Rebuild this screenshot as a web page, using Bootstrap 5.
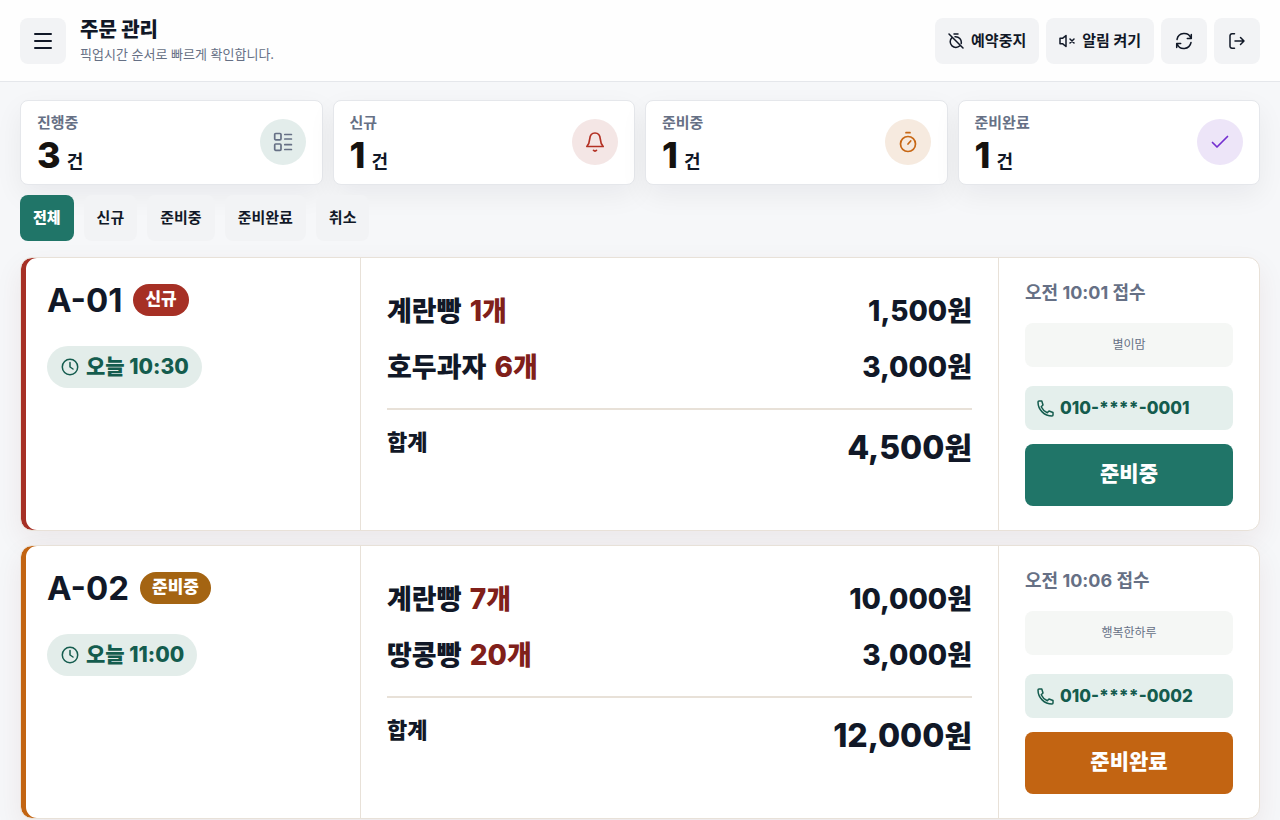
<!DOCTYPE html>
<html lang="ko">
<head>
<meta charset="utf-8">
<meta name="viewport" content="width=device-width, initial-scale=1">
<title>주문 관리</title>
<link href="https://cdn.jsdelivr.net/npm/bootstrap@5.3.0/dist/css/bootstrap.min.css" rel="stylesheet">
<style>
  :root { --ink:#111827; --muted:#667085; --teal:#207568; --teal-dark:#145c4e; --mint:#e3edea; --red:#a63025; --orange:#c26412; --line:#e8e1d8; }
  body { font-family: Inter, "Noto Sans CJK KR", sans-serif; color: var(--ink); background: #f6f7f9; }
  svg { fill: none; stroke: currentColor; stroke-width: 1.5; stroke-linecap: round; stroke-linejoin: round; flex-shrink: 0; }
  .topbar { padding: 17px 20px; background: #fefefe; border-bottom: 1px solid #e5e7eb; }
  .title-box { margin-left: 14px; padding-top: 1px; }
  .page-title { font-size: 20px; line-height: 24px; font-weight: 800; margin-bottom: 2px; }
  .page-sub { font-size: 13px; line-height: 20px; color: var(--muted); }
  .tools { gap: 7px; }
  .tool { height: 46px; min-width: 46px; padding: 0 13px; gap: 7px; border: 0; border-radius: 8px; background: #f2f3f5; color: var(--ink); font-size: 15px; line-height: 20px; font-weight: 700; }
  .tool.active { background: var(--teal); color: #fff; font-weight: 800; }
  .menu-icon { stroke-width: 2; }
  .stats { gap: 10px; padding: 18px 20px 10px; }
  .stat { flex: 1 1 0; padding: 0 16px 1px; height: 85px; background: #fff; border: 1px solid #e5e7eb; border-radius: 8px; box-shadow: 0 10px 28px rgba(17,24,39,.06); }
  .stat-text { padding-top: 6px; }
  .stat-name { font-size: 15px; line-height: 20px; font-weight: 700; color: var(--muted); }
  .stat-count { gap: 6px; }
  .stat-count strong { font-size: 36px; line-height: 44px; font-weight: 800; color: #15120f; }
  .stat-count span { font-size: 18px; line-height: 20px; font-weight: 700; }
  .dot { width: 46px; height: 46px; border-radius: 50%; }
  .dot svg { stroke-width: 1.7; }
  .dot-all { background: #e3edeb; color: var(--muted); }
  .dot-new { background: #f4e6e5; color: #b33124; }
  .dot-prep { background: #f6eadf; color: #c76714; }
  .dot-done { background: #ede5f8; color: #742fd0; }
  .tabs { gap: 10px; padding: 0 20px; }
  .orders { gap: 14px; padding: 16px 20px; }
  .order { --stripe: var(--red); display: grid; grid-template-columns: 340px minmax(0,1fr) 260px; background: #fff; border: 1px solid var(--line); border-radius: 12px; box-shadow: inset 5px 0 0 var(--stripe), 0 10px 28px rgba(100,30,30,.07); }
  .order.ready { --stripe: var(--orange); }
  .order > div { padding: 24px 26px; }
  .order > div:not(:last-child) { border-right: 1px solid var(--line); }
  .order-head { gap: 11px; }
  .order-no { font-size: 33px; line-height: 36px; font-weight: 700; }
  .state { height: 32px; padding: 0 12px; border-radius: 16px; font-size: 17px; line-height: 30px; font-weight: 800; color: #fff; background: var(--red); }
  .ready .state { background: #a46412; }
  .pickup { height: 42px; margin-top: 28px; padding: 0 13px 0 14px; gap: 7px; border-radius: 21px; background: var(--mint); color: var(--teal-dark); font-size: 21px; line-height: 40px; font-weight: 800; }
  .line-item { height: 56px; font-size: 28px; line-height: 58px; font-weight: 800; }
  .line-item .ko { font-size: 27px; }
  .qty { color: #80201a; margin-left: 2px; }
  .sum { margin-top: 14px; padding-top: 12px; border-top: 2px solid var(--line); }
  .sum-name { font-size: 22px; line-height: 40px; font-weight: 800; }
  .sum-price { font-size: 32px; line-height: 52px; font-weight: 800; }
  .sum-price .ko { font-size: 30px; }
  .received { font-size: 18px; line-height: 21px; font-weight: 700; color: var(--muted); }
  .guest { height: 44px; margin-top: 20px; border-radius: 8px; background: #f5f7f5; color: var(--muted); font-size: 12px; }
  .phone { height: 44px; margin-top: 19px; padding: 0 12px; gap: 6px; border-radius: 8px; background: #e4efec; color: var(--teal-dark); font-size: 17px; font-weight: 800; text-decoration: none; }
  .phone span { padding-top: 2px; }
  .advance { height: 62px; width: 100%; margin-top: 14px; border: 0; border-radius: 8px; background: var(--teal); color: #fff; font-size: 21px; line-height: 28px; font-weight: 800; padding-bottom: 3px; }
  .ready .advance { background: var(--orange); }
</style>
</head>
<body>
<header class="topbar d-flex align-items-center justify-content-between">
  <div class="d-flex align-items-center">
    <button class="tool d-flex align-items-center justify-content-center p-0" aria-label="메뉴"><svg class="menu-icon" width="20" height="20" viewBox="0 0 20 20"><path d="M2 3h16M2 10h16M2 17h16"/></svg></button>
    <div class="title-box"><h1 class="page-title">주문 관리</h1><p class="page-sub mb-0">픽업시간 순서로 빠르게 확인합니다.</p></div>
  </div>
  <div class="tools d-flex">
    <button class="tool d-flex align-items-center"><svg width="16" height="16" viewBox="0 0 16 16"><path d="M1 1l14 14M6 1h4M3.600 5a5.700 5.700 0 0 0 8.300 7.800M7 3.700a5.700 5.700 0 0 1 6.200 6.800"/></svg><span>예약중지</span></button>
    <button class="tool d-flex align-items-center"><svg width="16" height="16" viewBox="0 0 16 16"><path d="M1 5.300h2.500L7 2.500v11L3.500 10.700H1zM11 6l4 4M15 6l-4 4"/></svg><span>알림 켜기</span></button>
    <button class="tool d-flex align-items-center justify-content-center p-0" aria-label="새로고침"><svg width="18" height="18" viewBox="0 0 18 18"><path d="M16.300 2.500v4h-4M16 6.300A7.300 7.300 0 0 0 2 7.500M1.700 15.500v-4h4M2 11.700a7.300 7.300 0 0 0 14-1.200"/></svg></button>
    <button class="tool d-flex align-items-center justify-content-center p-0" aria-label="로그아웃"><svg width="18" height="18" viewBox="0 0 18 18"><path d="M6.500 1.800H4a2 2 0 0 0-2 2v10.400a2 2 0 0 0 2 2h2.500M7 9h9M12.500 5.500L16 9l-3.500 3.500"/></svg></button>
  </div>
</header>
<main>
  <section class="stats d-flex">
    <div class="stat d-flex align-items-center justify-content-between">
      <div class="stat-text"><div class="stat-name">진행중</div><div class="stat-count d-flex align-items-baseline"><strong>3</strong><span>건</span></div></div>
      <div class="dot dot-all d-flex align-items-center justify-content-center"><svg width="20" height="20" viewBox="0 0 20 20"><rect x="1.700" y="1.500" width="6.300" height="6.300" rx="1"/><rect x="1.700" y="12" width="6.300" height="6.300" rx="1"/><path d="M11.800 2.500h6.600M11.800 7h6.600M11.800 12.700h6.600M11.800 17.500h6.600"/></svg></div>
    </div>
    <div class="stat d-flex align-items-center justify-content-between">
      <div class="stat-text"><div class="stat-name">신규</div><div class="stat-count d-flex align-items-baseline"><strong>1</strong><span>건</span></div></div>
      <div class="dot dot-new d-flex align-items-center justify-content-center"><svg width="22" height="22" viewBox="0 0 22 22"><path d="M2.800 15.500h16.400c-2.200-2.200-2.700-4.500-2.900-7.500C16 4 14 2 11 2S6 4 5.700 8c-.2 3-.7 5.300-2.900 7.500zM9.500 19.300c.8 1 2.200 1 3 0"/></svg></div>
    </div>
    <div class="stat d-flex align-items-center justify-content-between">
      <div class="stat-text"><div class="stat-name">준비중</div><div class="stat-count d-flex align-items-baseline"><strong>1</strong><span>건</span></div></div>
      <div class="dot dot-prep d-flex align-items-center justify-content-center"><svg width="20" height="22" viewBox="0 0 20 22"><circle cx="10" cy="13" r="7.500"/><path d="M8 1.700h4M10 13l2.700-3"/></svg></div>
    </div>
    <div class="stat d-flex align-items-center justify-content-between">
      <div class="stat-text"><div class="stat-name">준비완료</div><div class="stat-count d-flex align-items-baseline"><strong>1</strong><span>건</span></div></div>
      <div class="dot dot-done d-flex align-items-center justify-content-center"><svg width="20" height="20" viewBox="0 0 20 20"><path d="M2.500 10.500L7 15 17.500 4.500"/></svg></div>
    </div>
  </section>
  <nav class="tabs d-flex" aria-label="주문 상태">
    <button class="tool active">전체</button><button class="tool">신규</button><button class="tool">준비중</button><button class="tool">준비완료</button><button class="tool">취소</button>
  </nav>
  <section class="orders d-flex flex-column">
    <article class="order">
      <div>
        <div class="order-head d-flex align-items-center"><h2 class="order-no mb-0">A-01</h2><span class="state">신규</span></div>
        <div class="pickup d-inline-flex align-items-center"><svg width="18" height="18" viewBox="0 0 18 18"><circle cx="9" cy="9" r="7.700"/><path d="M9 4.500V9l3 2"/></svg><span>오늘 10:30</span></div>
      </div>
      <div>
        <div class="line-item d-flex justify-content-between"><span><span class="ko">계란빵</span> <span class="qty">1<span class="ko">개</span></span></span><span>1,500<span class="ko">원</span></span></div>
        <div class="line-item d-flex justify-content-between"><span><span class="ko">호두과자</span> <span class="qty">6<span class="ko">개</span></span></span><span>3,000<span class="ko">원</span></span></div>
        <div class="sum d-flex justify-content-between"><span class="sum-name">합계</span><span class="sum-price">4,500<span class="ko">원</span></span></div>
      </div>
      <div>
        <div class="received">오전 10:01 접수</div>
        <div class="guest d-flex align-items-center justify-content-center">별이맘</div>
        <a href="#" class="phone d-flex align-items-center"><svg width="17" height="17" viewBox="0 0 17 17"><path d="M3.500 1H2a1 1 0 0 0-1 1c0 7.700 6.300 14 14 14a1 1 0 0 0 1-1v-2.500l-4-1.500-1.700 1.800C7.500 11.500 5.500 9.500 4.200 6.700L6 5 4.800 1z"/></svg><span>010-****-0001</span></a>
        <button class="advance">준비중</button>
      </div>
    </article>
    <article class="order ready">
      <div>
        <div class="order-head d-flex align-items-center"><h2 class="order-no mb-0">A-02</h2><span class="state">준비중</span></div>
        <div class="pickup d-inline-flex align-items-center"><svg width="18" height="18" viewBox="0 0 18 18"><circle cx="9" cy="9" r="7.700"/><path d="M9 4.500V9l3 2"/></svg><span>오늘 11:00</span></div>
      </div>
      <div>
        <div class="line-item d-flex justify-content-between"><span><span class="ko">계란빵</span> <span class="qty">7<span class="ko">개</span></span></span><span>10,000<span class="ko">원</span></span></div>
        <div class="line-item d-flex justify-content-between"><span><span class="ko">땅콩빵</span> <span class="qty">20<span class="ko">개</span></span></span><span>3,000<span class="ko">원</span></span></div>
        <div class="sum d-flex justify-content-between"><span class="sum-name">합계</span><span class="sum-price">12,000<span class="ko">원</span></span></div>
      </div>
      <div>
        <div class="received">오전 10:06 접수</div>
        <div class="guest d-flex align-items-center justify-content-center">행복한하루</div>
        <a href="#" class="phone d-flex align-items-center"><svg width="17" height="17" viewBox="0 0 17 17"><path d="M3.500 1H2a1 1 0 0 0-1 1c0 7.700 6.300 14 14 14a1 1 0 0 0 1-1v-2.500l-4-1.500-1.700 1.800C7.500 11.500 5.500 9.500 4.200 6.700L6 5 4.800 1z"/></svg><span>010-****-0002</span></a>
        <button class="advance">준비완료</button>
      </div>
    </article>
  </section>
</main>
<script src="https://cdn.jsdelivr.net/npm/bootstrap@5.3.0/dist/js/bootstrap.bundle.min.js"></script>
</body>
</html>
